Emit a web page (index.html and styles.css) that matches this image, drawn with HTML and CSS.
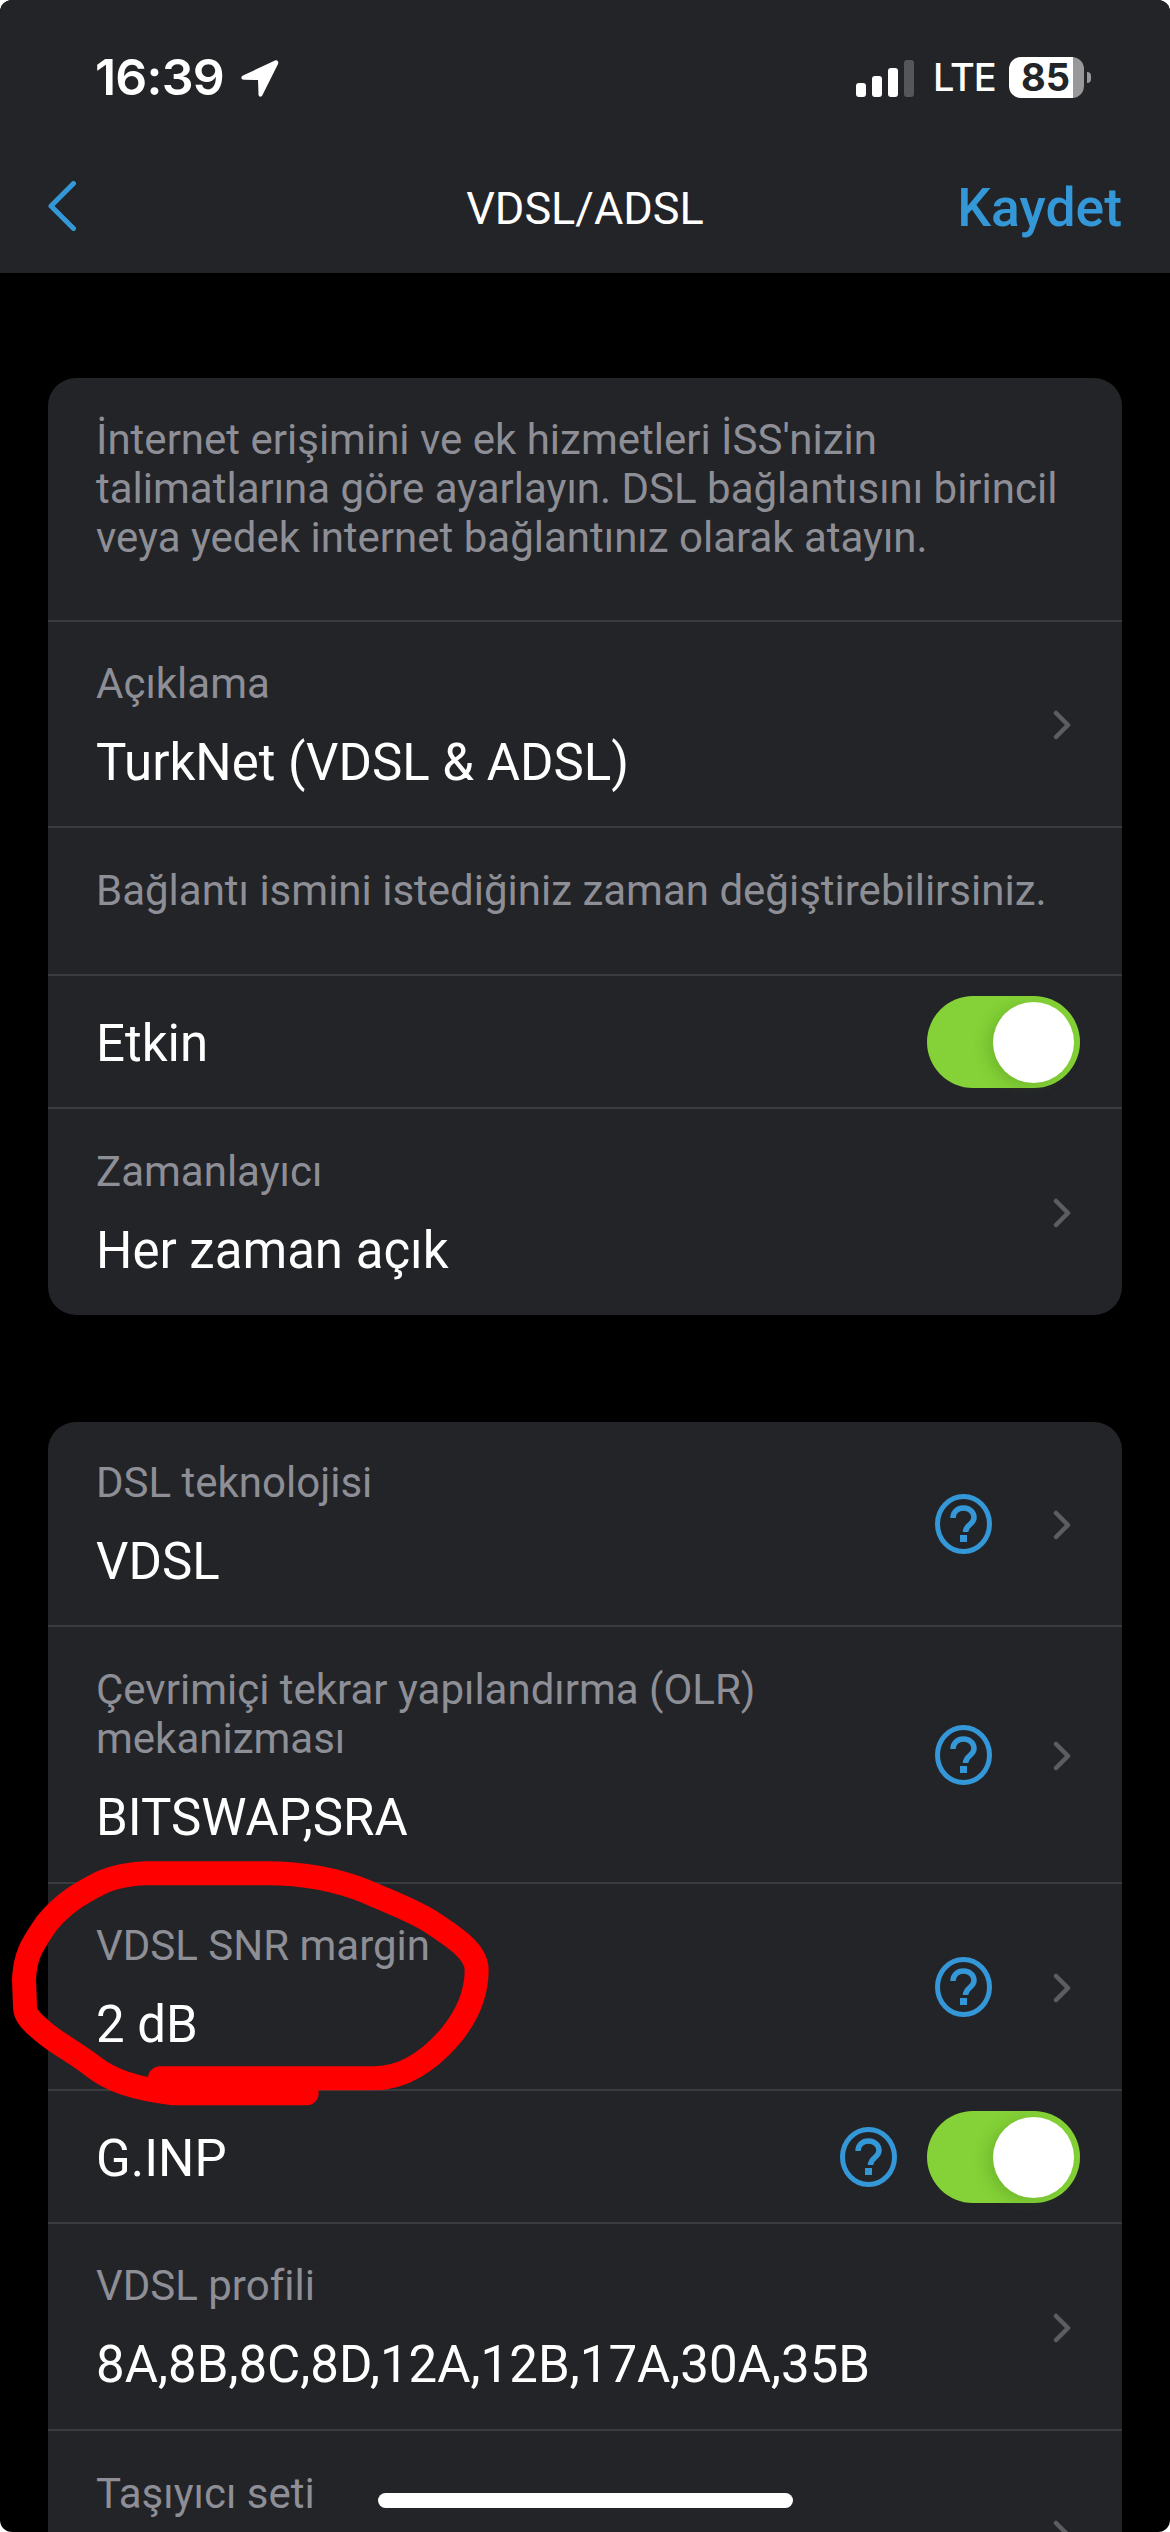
FILE: index.html
```html
<!DOCTYPE html>
<html lang="tr">
<head>
<meta charset="utf-8">
<title>VDSL/ADSL</title>
<link rel="stylesheet" href="styles.css">
</head>
<body>
<div class="screen">
  <header class="top">
    <div class="status">
      <div class="status-left">
        <span class="time">16:39</span>
        <svg class="loc" width="39" height="38" viewBox="0 0 39 38"><path d="M35 1.500 3 16.500c-2.500 1.300-2 4 .8 4.200L18 21l.5 14.500c.2 2.700 3 3 4 .6L38 5c1-2.500-.7-4.500-3-3.500z" fill="#fff"/></svg>
      </div>
      <div class="status-right">
        <div class="bars"><i class="b1"></i><i class="b2"></i><i class="b3"></i><i class="b4"></i></div>
        <span class="lte">LTE</span>
        <div class="battery"><span class="pct">85</span></div>
        <i class="tip"></i>
      </div>
    </div>
    <nav class="nav">
      <svg class="back" width="28" height="50" viewBox="0 0 28 50"><path d="M25.500 2.500 3 25l22.500 22.500" fill="none" stroke="#3498d8" stroke-width="5" stroke-linecap="round" stroke-linejoin="round"/></svg>
      <span class="title">VDSL/ADSL</span>
      <span class="save">Kaydet</span>
    </nav>
  </header>

  <main class="content">
    <section class="card">
      <div class="row note note-top"><p>İnternet erişimini ve ek hizmetleri İSS'nizin talimatlarına göre ayarlayın. DSL bağlantısını birincil veya yedek internet bağlantınız olarak atayın.</p></div>
      <div class="row item h206">
        <div class="text"><div class="label">Açıklama</div><div class="value">TurkNet (VDSL &amp; ADSL)</div></div>
        <svg class="chev" viewBox="0 0 18 30"><path d="M3 3l12 12L3 27"/></svg>
      </div>
      <div class="row note note-mid"><p>Bağlantı ismini istediğiniz zaman değiştirebilirsiniz.</p></div>
      <div class="row item h133">
        <div class="text"><div class="value">Etkin</div></div>
        <div class="toggle"><i></i></div>
      </div>
      <div class="row item last h206">
        <div class="text"><div class="label">Zamanlayıcı</div><div class="value">Her zaman açık</div></div>
        <svg class="chev" viewBox="0 0 18 30"><path d="M3 3l12 12L3 27"/></svg>
      </div>
    </section>

    <section class="card second">
      <div class="row item h205">
        <div class="text"><div class="label">DSL teknolojisi</div><div class="value">VDSL</div></div>
        <svg class="help" viewBox="0 0 57 60"><ellipse cx="28.500" cy="30" rx="26" ry="27.500"/><path d="M18 24c0-6 4.500-10 10.500-10S39 18 39 23.500c0 7-8.500 7-8.500 14.500"/><rect x="25" y="41" width="7" height="7"/></svg>
        <svg class="chev" viewBox="0 0 18 30"><path d="M3 3l12 12L3 27"/></svg>
      </div>
      <div class="row item h257">
        <div class="text"><div class="label">Çevrimiçi tekrar yapılandırma (OLR)<br>mekanizması</div><div class="value">BITSWAP,SRA</div></div>
        <svg class="help" viewBox="0 0 57 60"><ellipse cx="28.500" cy="30" rx="26" ry="27.500"/><path d="M18 24c0-6 4.500-10 10.500-10S39 18 39 23.500c0 7-8.500 7-8.500 14.500"/><rect x="25" y="41" width="7" height="7"/></svg>
        <svg class="chev" viewBox="0 0 18 30"><path d="M3 3l12 12L3 27"/></svg>
      </div>
      <div class="row item h207">
        <div class="text"><div class="label">VDSL SNR margin</div><div class="value">2 dB</div></div>
        <svg class="help" viewBox="0 0 57 60"><ellipse cx="28.500" cy="30" rx="26" ry="27.500"/><path d="M18 24c0-6 4.500-10 10.500-10S39 18 39 23.500c0 7-8.500 7-8.500 14.500"/><rect x="25" y="41" width="7" height="7"/></svg>
        <svg class="chev" viewBox="0 0 18 30"><path d="M3 3l12 12L3 27"/></svg>
      </div>
      <div class="row item h133">
        <div class="text"><div class="value">G.INP</div></div>
        <svg class="help tight" viewBox="0 0 57 60"><ellipse cx="28.500" cy="30" rx="26" ry="27.500"/><path d="M18 24c0-6 4.500-10 10.500-10S39 18 39 23.500c0 7-8.500 7-8.500 14.500"/><rect x="25" y="41" width="7" height="7"/></svg>
        <div class="toggle"><i></i></div>
      </div>
      <div class="row item h207">
        <div class="text"><div class="label">VDSL profili</div><div class="value">8A,8B,8C,8D,12A,12B,17A,30A,35B</div></div>
        <svg class="chev" viewBox="0 0 18 30"><path d="M3 3l12 12L3 27"/></svg>
      </div>
      <div class="row item last h206">
        <div class="text"><div class="label">Taşıyıcı seti</div><div class="value">&nbsp;</div></div>
        <svg class="chev" viewBox="0 0 18 30"><path d="M3 3l12 12L3 27"/></svg>
      </div>
    </section>
  </main>

  <svg class="scribble" width="520" height="300" viewBox="0 0 1560 900"><path d="M920 760L520 760C400 745 330 720 280 680C230 640 170 610 130 575C100 550 75 530 75 500L72 420C75 340 100 310 140 250C190 190 240 160 300 130C340 110 400 100 440 100L800 100C900 100 1000 115 1100 155C1180 190 1250 215 1300 250C1350 285 1430 330 1430 390C1430 460 1400 530 1350 590C1290 660 1210 715 1120 715L480 715"/></svg>
  <div class="home"></div>
</div>
</body>
</html>
```
FILE: styles.css
```css
* { box-sizing: border-box; }
html, body { margin: 0; padding: 0; background: #fff; }
body { width: 1170px; height: 2532px; overflow: hidden; font-family: Roboto, sans-serif; }
.screen { position: relative; width: 1170px; height: 2532px; background: #000; overflow: hidden; border-radius: 12px; }
.top { height: 273px; background: #232428; }
.status { height: 146px; padding: 57px 79px 0 95px; display: flex; justify-content: space-between; align-items: flex-start; color: #fff; }
.status-left { display: flex; align-items: center; gap: 16px; height: 41px; }
.time { font: 600 50px/41px Inter, sans-serif; letter-spacing: -.8px; }
.status-right { display: flex; align-items: center; height: 41px; }
.bars { display: flex; align-items: flex-end; gap: 6px; height: 37px; margin-top: 1px; }
.bars i { display: block; width: 10px; background: #fff; border-radius: 3px; }
.bars .b1 { height: 14px; }
.bars .b2 { height: 21px; }
.bars .b3 { height: 29px; }
.bars .b4 { height: 37px; background: #55565a; }
.lte { font: 500 38px/41px Inter, sans-serif; letter-spacing: -1px; margin-left: 19px; width: 57px; }
.battery { margin-left: 19px; width: 75px; height: 41px; border-radius: 12px; background: linear-gradient(90deg, #fff 0 64px, #98989b 64px); position: relative; padding-left: 12px; }
.pct { font: 700 38px/41px Inter, sans-serif; color: #232428; }
.tip { display: block; width: 4px; height: 11px; background: #98989b; border-radius: 0 6px 6px 0; margin-left: 3px; }
.nav { height: 127px; padding: 30px 48px 0 48px; display: flex; align-items: flex-start; position: relative; }
.back { display: block; margin-top: 5px; }
.title { position: absolute; left: 0; right: 0; top: 38px; text-align: center; color: #fff; font-size: 45px; line-height: 50px; }
.save { margin-left: auto; color: #3498d8; font-size: 53.500px; line-height: 58px; font-weight: 500; margin-top: 3px; }
.content { padding: 105px 48px 0; }
.card { background: #232428; border-radius: 28px; width: 1074px; }
.second { margin-top: 107px; }
.row { border-bottom: 2px solid #3a3b3f; padding: 0 48px; }
.row.last { border-bottom: 0; }
.note { color: #8e8f96; font-size: 42px; line-height: 49px; }
.note p { margin: 0; }
.note-top { height: 244px; padding-top: 37px; }
.note-mid { height: 148px; padding-top: 38px; }
.item { display: flex; align-items: center; padding-right: 51px; }
.h133 { height: 133px; }
.h205 { height: 205px; }
.h206 { height: 206px; }
.h207 { height: 207px; }
.h257 { height: 257px; }
.text { flex: 1; min-width: 0; padding-top: 4px; }
.label { color: #8e8f96; font-size: 42px; line-height: 49px; margin-bottom: 24px; }
.value { color: #fff; font-size: 51px; line-height: 62px; }
.chev { display: block; width: 18px; height: 30px; margin-left: 61px; margin-top: 2px; fill: none; stroke: #5c5d61; stroke-width: 4.500; stroke-linecap: round; stroke-linejoin: round; }
.help { display: block; width: 57px; height: 60px; fill: none; stroke: #3498d8; stroke-width: 5; }
.help path { stroke-width: 5.500; }
.help rect { fill: #3498d8; stroke: none; }
.help.tight { margin-right: 30px; }
.toggle { width: 153px; height: 92px; border-radius: 46px; background: #84d237; position: relative; margin-right: -9px; }
.toggle i { position: absolute; top: 6px; right: 6px; width: 81px; height: 81px; border-radius: 50%; background: #fff; box-shadow: -6px 3px 14px rgba(60,110,20,.25); }
.scribble { position: absolute; left: 0; top: 1840px; fill: none; stroke: #fe0000; stroke-width: 72; stroke-linecap: round; stroke-linejoin: round; }
.home { position: absolute; left: 378px; top: 2493px; width: 415px; height: 15px; border-radius: 8px; background: #fff; }
```
